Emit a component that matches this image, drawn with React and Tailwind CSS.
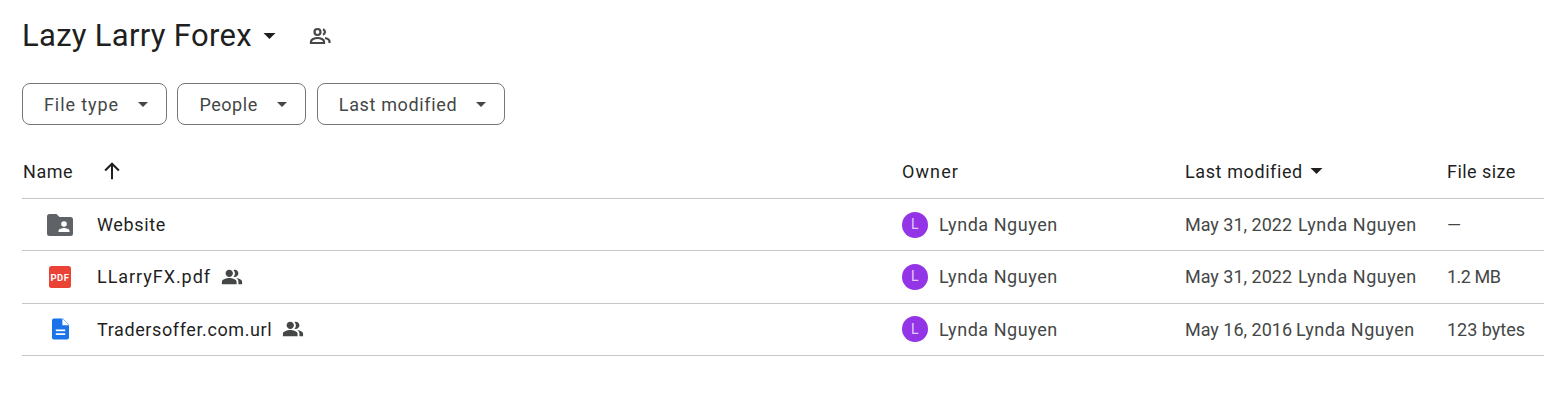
const GROUP = "M16.67 13.13C18.04 14.06 19 15.32 19 17v3h4v-3c0-2.18-3.57-3.47-6.33-3.87zM15 12c2.21 0 4-1.79 4-4s-1.79-4-4-4c-.47 0-.91.1-1.33.24a5.98 5.98 0 0 1 0 7.52c.42.14.86.24 1.33.24zM9 12c2.21 0 4-1.79 4-4s-1.79-4-4-4-4 1.79-4 4 1.79 4 4 4zM9 13c-2.67 0-8 1.34-8 4v3h16v-3c0-2.66-5.33-4-8-4z";

function Caret({ className }) {
  return (
    <svg viewBox="0 0 10 5" className={className}>
      <path d="M0 0h10L5 5z" fill="currentColor" />
    </svg>
  );
}

function Shared() {
  return (
    <svg viewBox="0 0 24 24" className="ml-[10px] h-[22px] w-[22px] text-[#444746]">
      <path d={GROUP} fill="currentColor" />
    </svg>
  );
}

function FolderIcon() {
  return (
    <svg viewBox="0 0 26 22" className="h-[22px] w-[26px]">
      <path d="M2.500 0h7l3 3h11A2.500 2.500 0 0 1 26 5.500v14a2.500 2.500 0 0 1-2.500 2.500h-21A2.500 2.500 0 0 1 0 19.500v-17A2.500 2.500 0 0 1 2.500 0z" fill="#5f6368" />
      <circle cx="17" cy="10" r="2.800" fill="#fff" />
      <path d="M11.500 18v-1.200c0-1.900 3.700-2.800 5.500-2.800s5.500.9 5.500 2.800V18z" fill="#fff" />
    </svg>
  );
}

function PdfIcon() {
  return (
    <svg viewBox="0 0 22 22" className="h-[22px] w-[22px]">
      <rect width="22" height="22" rx="2.500" fill="#ea4335" />
      <text x="11" y="15" textAnchor="middle" fontSize="9.500" fontWeight="700" fill="#fff" fontFamily="Roboto, sans-serif">PDF</text>
    </svg>
  );
}

function DocIcon() {
  return (
    <svg viewBox="0 0 18 22" className="h-[22px] w-[17px]">
      <path d="M2 0h9.500L18 6.500V20a2 2 0 0 1-2 2H2a2 2 0 0 1-2-2V2a2 2 0 0 1 2-2z" fill="#1a73e8" />
      <path d="M11 0v7h7z" fill="#fff" />
      <rect x="4" y="11.500" width="10" height="1.800" fill="#fff" />
      <rect x="4" y="15.500" width="10" height="1.800" fill="#fff" />
    </svg>
  );
}

const filters = [
  { label: "File type", w: "w-[145px]", track: "tracking-[0.9px]" },
  { label: "People", w: "w-[129px]", track: "tracking-[0.55px]" },
  { label: "Last modified", w: "w-[188px]", track: "tracking-[0.65px]" },
];

const rows = [
  { name: "Website", icon: <FolderIcon />, shared: false, date: "May 31, 2022", size: "—", track: "tracking-[0.65px]", gap: "gap-[6px]", sizeTrack: "tracking-normal" },
  { name: "LLarryFX.pdf", icon: <PdfIcon />, shared: true, date: "May 31, 2022", size: "1.2 MB", track: "tracking-[0.95px]", gap: "gap-[6px]", sizeTrack: "tracking-[-0.5px]" },
  { name: "Tradersoffer.com.url", icon: <DocIcon />, shared: true, date: "May 16, 2016", size: "123 bytes", track: "tracking-[0.6px]", gap: "gap-[4px]", sizeTrack: "tracking-normal" },
];

export default function App() {
  return (
    <div className="h-[407px] overflow-hidden bg-white pl-[22px] font-['Roboto',sans-serif] text-[18px] tracking-[0.55px]">
      <div className="flex h-[72px] items-center">
        <h1 className="text-[31px] font-normal leading-9 tracking-[0.3px] text-[#1f1f1f]">Lazy Larry Forex</h1>
        <Caret className="ml-[11px] h-[6px] w-[13px] text-[#1f1f1f]" />
        <svg viewBox="0 0 24 24" className="ml-[32px] h-[24px] w-[24px] text-[#444746]" fill="none" stroke="currentColor" strokeWidth="2.200">
          <circle cx="9.500" cy="8" r="3" />
          <path d="M3 19v-1.500c0-2 3.500-3.500 6.500-3.500s6.500 1.500 6.500 3.500V19z" />
          <path d="M15 5.200a3 3 0 0 1 0 5.600M17 14c2.500.5 4.500 1.700 4.500 3.500V19" />
        </svg>
      </div>
      <div className="mt-[11px] flex gap-[10.400px]">
        {filters.map((f) => (
          <div key={f.label} className={`flex h-[42px] items-center justify-between rounded-lg border border-[#747775] pl-[21px] pr-[18px] text-[#444746] ${f.w} ${f.track}`}>
            <span>{f.label}</span>
            <Caret className="h-[5px] w-[10px]" />
          </div>
        ))}
      </div>
      <div className="mt-[21px]">
        <div className="grid h-[53px] grid-cols-[880px_283px_1fr] items-center border-b border-[#c7c7c7] pb-[2px] text-[#1f1f1f]">
          <div className="flex items-center pl-[1px]">
            <span>Name</span>
            <svg viewBox="0 0 24 24" className="ml-[28px] h-[22px] w-[22px]" fill="none" stroke="currentColor" strokeWidth="2.200">
              <path d="M12 21V4M4.500 11.500 12 4l7.500 7.500" />
            </svg>
          </div>
          <div className="tracking-[1.1px]">Owner</div>
          <div className="flex items-center">
            <div className="flex w-[262px] items-center">
              <span className="tracking-[0.6px]">Last modified</span>
              <Caret className="ml-[7px] h-[6px] w-[13px]" />
            </div>
            <span className="tracking-[0.45px]">File size</span>
          </div>
        </div>
        {rows.map((r) => (
          <div key={r.name} className="grid h-[52.330px] grid-cols-[880px_283px_1fr] items-center border-b border-[#c7c7c7]">
            <div className="flex items-center">
              <div className="flex w-[75px] justify-center pl-[1px]">{r.icon}</div>
              <span className={`text-[#1f1f1f] ${r.track}`}>{r.name}</span>
              {r.shared && <Shared />}
            </div>
            <div className="flex items-center text-[#444746]">
              <div className="flex h-[26px] w-[26px] items-center justify-center rounded-full bg-[#9334e6] text-[14px] text-[#e4cbfa]">L</div>
              <span className="ml-[11px]">Lynda Nguyen</span>
            </div>
            <div className="flex items-center text-[#444746]">
              <div className={`flex w-[262px] items-center ${r.gap}`}>
                <span className="tracking-normal">{r.date}</span>
                <span>Lynda Nguyen</span>
              </div>
              <span className={r.sizeTrack}>{r.size}</span>
            </div>
          </div>
        ))}
      </div>
    </div>
  );
}
